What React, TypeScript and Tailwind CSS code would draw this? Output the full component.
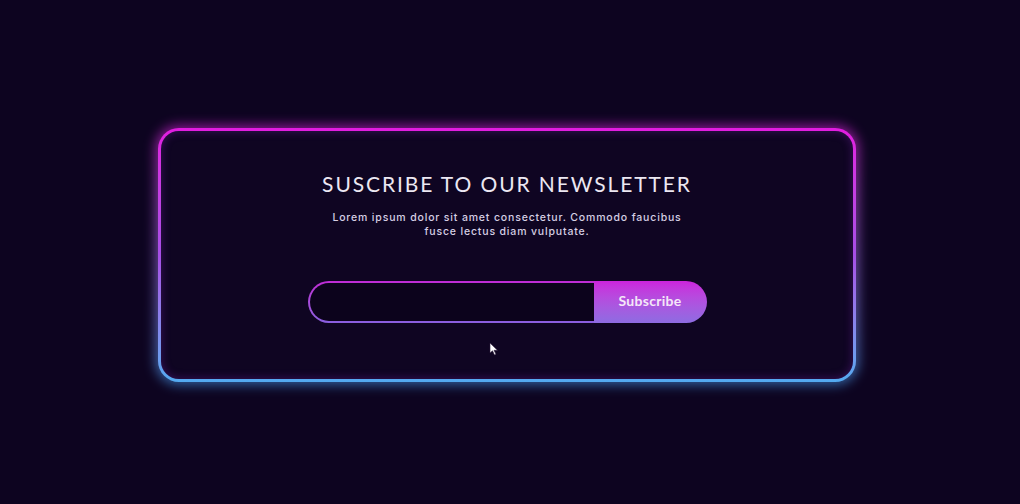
import { useState } from 'react';

const App = () => {
  const [email, setEmail] = useState('');

  return (
    <div className="relative h-[504px] w-[1020px] overflow-hidden bg-[#0d0420] pl-[158px] pt-[128px]">
      {/* Card */}
      <div className="relative w-[698px]">
        {/* glow */}
        <div className="absolute -inset-[3px] rounded-[24px] bg-gradient-to-b from-[#d81ad8] to-[#3f9df0] opacity-60 blur-[6px]"></div>
        <div className="relative rounded-[21px] bg-gradient-to-b from-[#e21be0] via-[#a64ee6] to-[#52aaf0] p-[3px]">
          <div className="flex h-[248px] flex-col items-center rounded-[18px] bg-[#0f0522] pt-[41px] shadow-[inset_0_0_10px_rgba(140,40,200,0.35)]">
            <h2 className="font-['Lato',sans-serif] text-[21px] leading-[24px] font-normal tracking-[0.09em] text-[#ece8f2]">
              SUSCRIBE TO OUR NEWSLETTER
            </h2>
            <p className="mt-[15px] w-[362px] text-center font-['Inter',sans-serif] text-[10.5px] leading-[14px] font-medium tracking-[0.08em] text-[#d6cfe4]">
              Lorem ipsum dolor sit amet consectetur. Commodo faucibus fusce lectus diam vulputate.
            </p>

            {/* Form */}
            <form className="mt-[42px] flex h-[42px] w-[399px]" onSubmit={(e) => e.preventDefault()}>
              <div className="flex-1 rounded-l-full bg-gradient-to-b from-[#c02ad6] to-[#8a5fe0] py-[2px] pl-[2px]">
                <input
                  value={email}
                  onChange={(e) => setEmail(e.target.value)}
                  className="h-full w-full rounded-l-full bg-[#0c031c] px-4 text-sm text-white outline-none"
                />
              </div>
              <button
                type="submit"
                className="w-[113px] rounded-r-full bg-gradient-to-b from-[#cc22dc] to-[#8d6ce2] pb-[3px] font-['Lato',sans-serif] text-[14px] font-bold tracking-[0.02em] text-[#f4e8f8]"
              >
                Subscribe
              </button>
            </form>
          </div>
        </div>
      </div>

      {/* mouse pointer */}
      <svg className="absolute left-[489px] top-[342px]" width="10" height="14" viewBox="0 0 10 14">
        <path d="M1 1 L1 11 L3.5 8.8 L5.5 13 L7 12.3 L5 8.3 L8.5 8.3 Z" fill="#ffffff" stroke="#2a1a3a" strokeWidth="0.6" />
      </svg>
    </div>
  );
};

export default App;
